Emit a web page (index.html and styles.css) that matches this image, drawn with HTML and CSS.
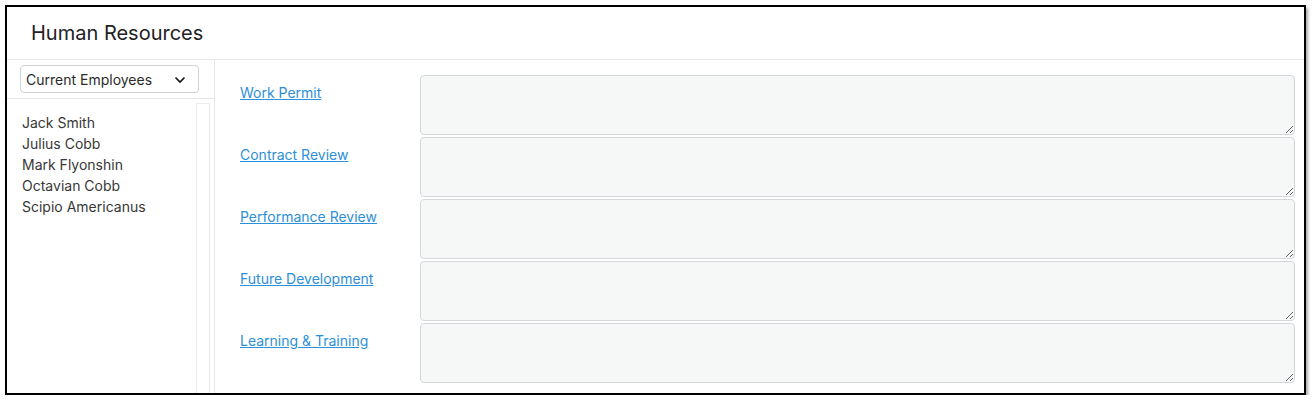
FILE: index.html
```html
<!DOCTYPE html>
<html lang="en">
<head>
  <meta charset="UTF-8" />
  <title>Human Resources</title>
  <link rel="stylesheet" href="styles.css">
</head>
<body>
  <div class="frame">
    <div class="header">Human Resources</div>
    <div class="main">
      <div class="sidebar">
        <div class="picker">
          <div class="select">
            <span>Current Employees</span>
            <svg width="12" height="8" viewBox="0 0 12 8"><path d="M1.5 1.5 L6 6 L10.5 1.5" fill="none" stroke="#111" stroke-width="1.6"/></svg>
          </div>
        </div>
        <div class="list-wrap">
          <ul class="names">
            <li>Jack Smith</li>
            <li>Julius Cobb</li>
            <li>Mark Flyonshin</li>
            <li>Octavian Cobb</li>
            <li>Scipio Americanus</li>
          </ul>
          <div class="track"></div>
        </div>
      </div>
      <div class="content">
        <div class="row"><a href="#">Work Permit</a><textarea></textarea></div>
        <div class="row"><a href="#">Contract Review</a><textarea></textarea></div>
        <div class="row"><a href="#">Performance Review</a><textarea></textarea></div>
        <div class="row"><a href="#">Future Development</a><textarea></textarea></div>
        <div class="row"><a href="#">Learning &amp; Training</a><textarea></textarea></div>
      </div>
    </div>
  </div>
</body>
</html>
```
FILE: styles.css
```css
body {
  margin: 0;
  background: #fff;
  font-family: Inter, 'Noto Sans', sans-serif;
  color: #333;
}
.frame {
  margin: 5px 0 0 5px;
  width: 1297px;
  height: 386px;
  border: 2px solid #000;
  box-shadow: 2px 3px 3px rgba(0, 0, 0, 0.35);
  display: flex;
  flex-direction: column;
  overflow: hidden;
}
.header {
  height: 52px;
  line-height: 52px;
  padding-left: 24px;
  font-size: 20px;
  color: #222;
  border-bottom: 1px solid #e7e7e7;
  flex-shrink: 0;
}
.main {
  flex: 1;
  display: flex;
  min-height: 0;
}
.sidebar {
  width: 207px;
  border-right: 1px solid #e7e7e7;
  display: flex;
  flex-direction: column;
}
.picker {
  height: 39px;
  padding: 5px 0 0 13px;
  box-sizing: border-box;
  border-bottom: 1px solid #e7e7e7;
}
.select {
  width: 179px;
  height: 28px;
  box-sizing: border-box;
  border: 1px solid #ced2d8;
  border-radius: 4px;
  display: flex;
  align-items: center;
  justify-content: space-between;
  padding: 1px 12px 0 5px;
  font-size: 14px;
  color: #2b2b2b;
}
.select svg {
  display: block;
}
.list-wrap {
  flex: 1;
  display: flex;
  padding: 4px 4px 0 0;
}
.names {
  flex: 1;
  list-style: none;
  margin: 0;
  padding: 9px 0 0 15px;
  font-size: 14px;
  line-height: 21px;
  color: #383838;
}
.track {
  width: 12px;
  border: 1px solid #ececec;
  border-bottom: none;
}
.content {
  flex: 1;
  padding: 15px 9px 0 25px;
  display: flex;
  flex-direction: column;
  gap: 2px;
}
.row {
  display: grid;
  grid-template-columns: 180px 1fr;
}
.row a {
  padding-top: 8px;
  line-height: 20px;
  font-size: 14px;
  color: #2d8fd8;
  text-decoration: underline;
  align-self: start;
  justify-self: start;
}
.row textarea {
  height: 60px;
  box-sizing: border-box;
  margin: 0;
  border: 1px solid #d3d7dc;
  border-radius: 4px;
  background: #f6f7f7;
  font-family: inherit;
}
```
